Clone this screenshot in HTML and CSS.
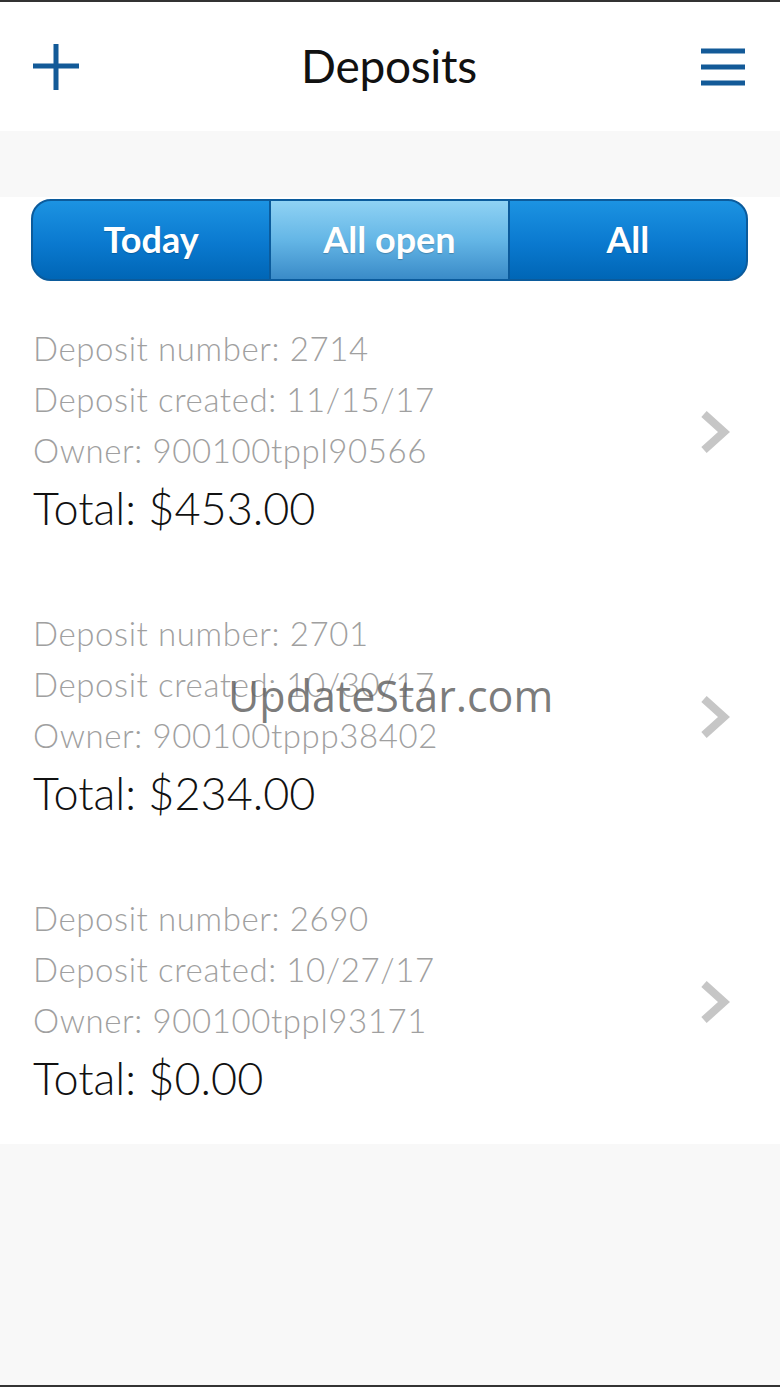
FILE: index.html
```html
<!DOCTYPE html>
<html lang="en">
<head>
    <meta charset="UTF-8">
    <title>Deposits</title>
    <link rel="stylesheet" href="styles.css">
</head>
<body>

<div class="app">
    <header class="topbar">
        <svg class="icon-plus" width="46" height="46" viewBox="0 0 46 46">
            <path d="M23 0 V46 M0 22 H46" stroke="#135a98" stroke-width="5" fill="none"/>
        </svg>
        <h1 class="title">Deposits</h1>
        <svg class="icon-menu" width="44" height="40" viewBox="0 0 44 40">
            <path d="M0 4 H44 M0 20 H44 M0 36 H44" stroke="#135a98" stroke-width="5" fill="none"/>
        </svg>
    </header>

    <div class="band"></div>

    <main class="content">
        <div class="segments">
            <div class="seg">Today</div>
            <div class="seg active">All open</div>
            <div class="seg">All</div>
        </div>

        <ul class="deposits">
            <li class="deposit">
                <div class="info">
                    <p class="line">Deposit number: 2714</p>
                    <p class="line">Deposit created: 11/15/17</p>
                    <p class="line">Owner: 900100tppl90566</p>
                    <p class="total">Total: $453.00</p>
                </div>
                <svg class="chevron" width="30" height="44" viewBox="0 0 30 44"><path d="M4 4 L24 22 L4 40" stroke="#c6c6c6" stroke-width="8" fill="none"/></svg>
            </li>
            <li class="deposit">
                <div class="info">
                    <p class="line">Deposit number: 2701</p>
                    <p class="line">Deposit created: 10/30/17</p>
                    <p class="line">Owner: 900100tppp38402</p>
                    <p class="total">Total: $234.00</p>
                </div>
                <svg class="chevron" width="30" height="44" viewBox="0 0 30 44"><path d="M4 4 L24 22 L4 40" stroke="#c6c6c6" stroke-width="8" fill="none"/></svg>
            </li>
            <li class="deposit">
                <div class="info">
                    <p class="line">Deposit number: 2690</p>
                    <p class="line">Deposit created: 10/27/17</p>
                    <p class="line">Owner: 900100tppl93171</p>
                    <p class="total">Total: $0.00</p>
                </div>
                <svg class="chevron" width="30" height="44" viewBox="0 0 30 44"><path d="M4 4 L24 22 L4 40" stroke="#c6c6c6" stroke-width="8" fill="none"/></svg>
            </li>
        </ul>
    </main>

    <div class="filler"></div>

    <div class="watermark">UpdateStar.com</div>
</div>

</body>
</html>
```

FILE: styles.css
```css
html, body { margin: 0; padding: 0; }
body { background: #f8f8f8; font-family: Lato, "Open Sans", sans-serif; }

.app { position: relative; display: flex; flex-direction: column; min-height: 1387px; box-sizing: border-box; border-top: 2px solid #333; border-bottom: 2px solid #333; }

.topbar { background: #fff; height: 129px; display: flex; align-items: center; justify-content: space-between; padding: 0 35px 0 33px; box-sizing: border-box; }
.title { margin: 0 2px 2px 0; font-size: 46px; font-weight: 400; color: #111; letter-spacing: -0.3px; }

.band { height: 66px; background: #f8f8f8; }

.content { background: #fff; padding-top: 2px; }

.segments { display: flex; margin: 0 32px 0 31px; height: 82px; border: 2px solid #0b5b9c; border-radius: 20px; overflow: hidden; box-sizing: border-box; background: linear-gradient(#1c93e2, #0a79cf 55%, #0066b6); }
.seg { flex: 1; display: flex; align-items: center; justify-content: center; color: #fff; font-size: 36px; font-weight: 700; text-shadow: 0 1px 1px rgba(0,0,0,0.2); padding-bottom: 2px; }
.seg + .seg { border-left: 2px solid #0b5b9c; }
.seg.active { background: linear-gradient(#8fd2f4, #64b6e6 50%, #3a8bc8); }

.deposits { list-style: none; margin: 8px 0 0; padding: 0; }
.deposit { display: flex; align-items: center; justify-content: space-between; height: 285px; padding: 0 50px 0 33px; box-sizing: border-box; }
.line { margin: 0; font-size: 33px; line-height: 51px; font-weight: 300; color: #a0a0a0; letter-spacing: 0.6px; }
.total { margin: 0; font-size: 45px; line-height: 64px; font-weight: 300; color: #111; }

.filler { flex: 1; background: #f8f8f8; }

.watermark { position: absolute; left: 228px; top: 664px; font-family: "Open Sans", sans-serif; font-size: 43px; color: rgba(100,100,100,0.85); }
```
